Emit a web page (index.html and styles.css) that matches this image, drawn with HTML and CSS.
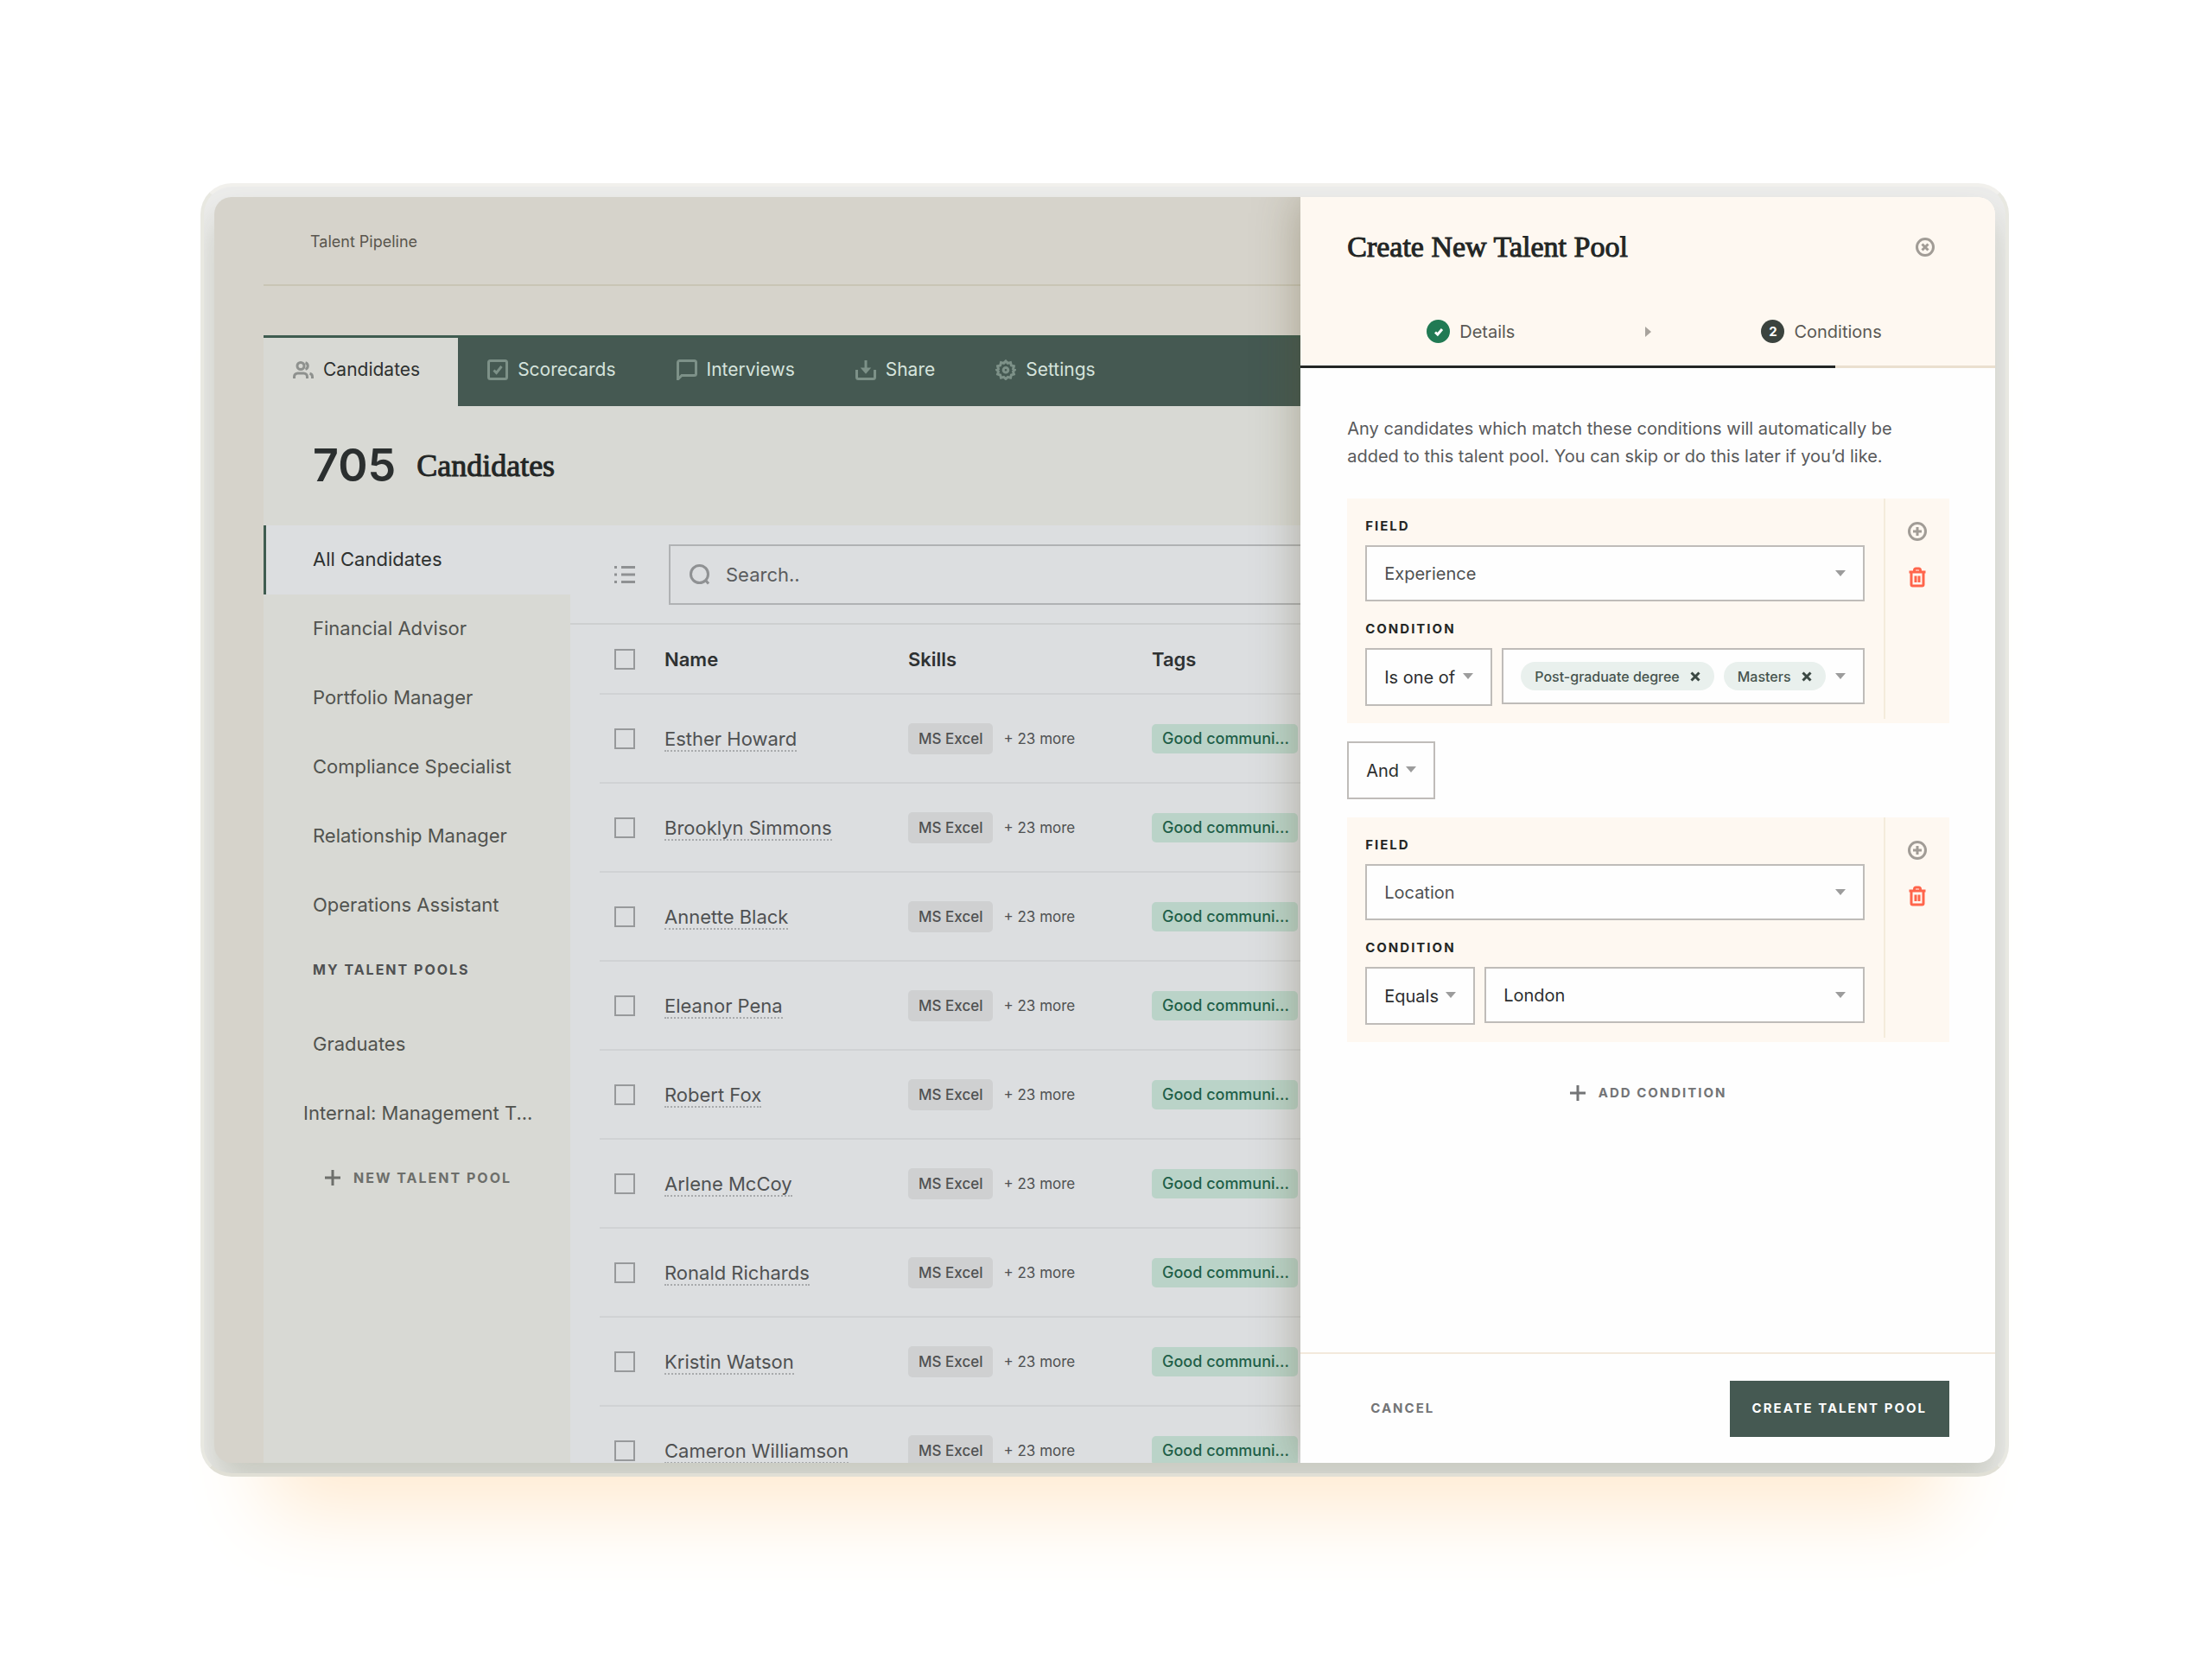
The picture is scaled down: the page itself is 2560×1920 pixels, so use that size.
FILE: index.html
```html
<!DOCTYPE html>
<html lang="en">
<head>
<meta charset="utf-8">
<title>Talent Pipeline</title>
<link rel="stylesheet" href="styles.css">
</head>
<body>
<svg class="sprite" aria-hidden="true">
  <symbol id="i-users" viewBox="0 0 24 24"><path d="M1.500 22v-2a4 4 0 0 1 4-4h7a4 4 0 0 1 4 4v2M22.500 22v-2a4 4 0 0 0-3-3.800M14.500 3.700a4 4 0 0 1 0 7.600"/><circle cx="9" cy="7.500" r="4"/></symbol>
  <symbol id="i-check" viewBox="0 0 24 24"><rect x="1.500" y="1.500" width="21" height="21" rx="2"/><path d="M7.500 12.500l3 3 6-7.500"/></symbol>
  <symbol id="i-chat" viewBox="0 0 24 24"><path d="M1.500 23V3.500a2 2 0 0 1 2-2h17a2 2 0 0 1 2 2v13a2 2 0 0 1-2 2H6z"/></symbol>
  <symbol id="i-share" viewBox="0 0 24 24"><path d="M1.500 12v8.500a2 2 0 0 0 2 2h17a2 2 0 0 0 2-2V12M12 1v12"/><path d="M9 11l3 3.500 3-3.500z" fill="currentColor"/></symbol>
  <symbol id="i-gear" viewBox="0 0 24 24"><path d="M12 2l2.300 2.400 3.200-.8.900 3.200 3 .9-.8 3.200L22.500 12l-1.900 2 .8 3.100-3 .9-.9 3.200-3.200-.8L12 22.500l-2.300-2.100-3.200.8-.9-3.200-3-.9.8-3.100L1.500 12l1.900-1.100-.8-3.200 3-.9.900-3.200 3.200.8z"/><circle cx="12" cy="12.200" r="2.800"/></symbol>
  <symbol id="i-list" viewBox="0 0 24 24"><path d="M8 3.500h16M8 12h16M8 20.500h16M0 3.500h3M0 12h3M0 20.500h3"/></symbol>
  <symbol id="i-search" viewBox="0 0 24 24"><circle cx="11.500" cy="11.500" r="10"/><path d="M18.500 18.500L22 22.500"/></symbol>
  <symbol id="i-plus" viewBox="0 0 18 18"><path d="M9 0v18M0 9h18"/></symbol>
  <symbol id="i-close" viewBox="0 0 24 24"><circle cx="12" cy="12" r="9.500"/><path d="M8.500 8.500l7 7M15.500 8.500l-7 7"/></symbol>
  <symbol id="i-add" viewBox="0 0 24 24"><circle cx="12" cy="12" r="9.500"/><path d="M12 7v10M7 12h10"/></symbol>
  <symbol id="i-trash" viewBox="0 0 24 24"><path d="M2.500 6h19M8.500 5.500V4a2 2 0 0 1 2-2h3a2 2 0 0 1 2 2v1.500M5 6v14.500a1.500 1.500 0 0 0 1.500 1.500h11a1.500 1.500 0 0 0 1.500-1.500V6M10 10.500v7.500M14 10.500v7.500"/></symbol>
  <symbol id="i-x" viewBox="0 0 12 12"><path d="M1.500 1.500l9 9M10.500 1.500l-9 9"/></symbol>
  <symbol id="i-tick" viewBox="0 0 12 12"><path d="M2 6.500L4.800 9 10 3"/></symbol>
</svg>

<div class="frame">
<div class="window">
  <div class="app">
    <header class="topbar">Talent Pipeline</header>
    <main class="card">
      <nav class="tabs">
        <a class="tab tab-active" href="#"><svg class="icon"><use href="#i-users"/></svg>Candidates</a>
        <a class="tab" href="#"><svg class="icon"><use href="#i-check"/></svg>Scorecards</a>
        <a class="tab" href="#"><svg class="icon"><use href="#i-chat"/></svg>Interviews</a>
        <a class="tab" href="#"><svg class="icon"><use href="#i-share"/></svg>Share</a>
        <a class="tab" href="#"><svg class="icon"><use href="#i-gear"/></svg>Settings</a>
      </nav>
      <h1 class="heading"><span class="count">705</span><span class="serif serif-large">Candidates</span></h1>
      <div class="columns">
        <aside class="sidebar">
          <a class="side-item side-active" href="#">All Candidates</a>
          <a class="side-item" href="#">Financial Advisor</a>
          <a class="side-item" href="#">Portfolio Manager</a>
          <a class="side-item" href="#">Compliance Specialist</a>
          <a class="side-item" href="#">Relationship Manager</a>
          <a class="side-item" href="#">Operations Assistant</a>
          <h2 class="side-title">My talent pools</h2>
          <a class="side-item" href="#">Graduates</a>
          <a class="side-item side-long" href="#">Internal: Management T...</a>
          <button class="text-button side-new" type="button"><svg class="icon-plus"><use href="#i-plus"/></svg>New talent pool</button>
        </aside>
        <section class="list">
          <div class="toolbar">
            <button class="icon-button list-toggle" type="button" aria-label="List view"><svg class="icon"><use href="#i-list"/></svg></button>
            <div class="search">
              <svg class="icon"><use href="#i-search"/></svg>
              <input class="search-input" type="text" placeholder="Search.." aria-label="Search">
            </div>
          </div>
          <table class="table">
            <thead>
              <tr><th class="c-check"><input class="box" type="checkbox" aria-label="Select all"></th><th class="c-name">Name</th><th class="c-skills">Skills</th><th>Tags</th></tr>
            </thead>
            <tbody>
              <tr><td><input class="box" type="checkbox" aria-label="Esther Howard"></td><td><a class="person" href="#">Esther Howard</a></td><td><span class="skill">MS Excel</span><span class="more">+ 23 more</span></td><td><span class="tag">Good communi...</span></td></tr>
              <tr><td><input class="box" type="checkbox" aria-label="Brooklyn Simmons"></td><td><a class="person" href="#">Brooklyn Simmons</a></td><td><span class="skill">MS Excel</span><span class="more">+ 23 more</span></td><td><span class="tag">Good communi...</span></td></tr>
              <tr><td><input class="box" type="checkbox" aria-label="Annette Black"></td><td><a class="person" href="#">Annette Black</a></td><td><span class="skill">MS Excel</span><span class="more">+ 23 more</span></td><td><span class="tag">Good communi...</span></td></tr>
              <tr><td><input class="box" type="checkbox" aria-label="Eleanor Pena"></td><td><a class="person" href="#">Eleanor Pena</a></td><td><span class="skill">MS Excel</span><span class="more">+ 23 more</span></td><td><span class="tag">Good communi...</span></td></tr>
              <tr><td><input class="box" type="checkbox" aria-label="Robert Fox"></td><td><a class="person" href="#">Robert Fox</a></td><td><span class="skill">MS Excel</span><span class="more">+ 23 more</span></td><td><span class="tag">Good communi...</span></td></tr>
              <tr><td><input class="box" type="checkbox" aria-label="Arlene McCoy"></td><td><a class="person" href="#">Arlene McCoy</a></td><td><span class="skill">MS Excel</span><span class="more">+ 23 more</span></td><td><span class="tag">Good communi...</span></td></tr>
              <tr><td><input class="box" type="checkbox" aria-label="Ronald Richards"></td><td><a class="person" href="#">Ronald Richards</a></td><td><span class="skill">MS Excel</span><span class="more">+ 23 more</span></td><td><span class="tag">Good communi...</span></td></tr>
              <tr><td><input class="box" type="checkbox" aria-label="Kristin Watson"></td><td><a class="person" href="#">Kristin Watson</a></td><td><span class="skill">MS Excel</span><span class="more">+ 23 more</span></td><td><span class="tag">Good communi...</span></td></tr>
              <tr><td><input class="box" type="checkbox" aria-label="Cameron Williamson"></td><td><a class="person" href="#">Cameron Williamson</a></td><td><span class="skill">MS Excel</span><span class="more">+ 23 more</span></td><td><span class="tag">Good communi...</span></td></tr>
            </tbody>
          </table>
        </section>
      </div>
    </main>
  </div>

  <section class="drawer" role="dialog" aria-labelledby="drawer-title">
    <header class="drawer-head">
      <div class="drawer-top">
        <h2 class="serif" id="drawer-title">Create New Talent Pool</h2>
        <button class="icon-button" type="button" aria-label="Close"><svg class="icon"><use href="#i-close"/></svg></button>
      </div>
      <ol class="steps">
        <li class="step"><span class="dot dot-done"><svg class="icon-tick"><use href="#i-tick"/></svg></span>Details</li>
        <li class="step-arrow" aria-hidden="true"></li>
        <li class="step"><span class="dot">2</span>Conditions</li>
      </ol>
      <div class="progress"><div class="progress-fill"></div></div>
    </header>

    <form class="drawer-body" id="pool-form">
      <p class="intro">Any candidates which match these conditions will automatically be added to this talent pool. You can skip or do this later if you’d like.</p>

      <div class="rule">
        <div class="rule-main">
          <label class="label" for="field-1">Field</label>
          <div class="select"><select id="field-1"><option>Experience</option></select></div>
          <label class="label" for="op-1">Condition</label>
          <div class="rule-row">
            <div class="select select-fit"><select id="op-1"><option>Is one of</option></select></div>
            <div class="select select-chips">
              <span class="chip">Post-graduate degree<button class="chip-x" type="button" aria-label="Remove Post-graduate degree"><svg class="icon-x"><use href="#i-x"/></svg></button></span>
              <span class="chip">Masters<button class="chip-x" type="button" aria-label="Remove Masters"><svg class="icon-x"><use href="#i-x"/></svg></button></span>
            </div>
          </div>
        </div>
        <div class="rule-side">
          <button class="icon-button" type="button" aria-label="Add"><svg class="icon"><use href="#i-add"/></svg></button>
          <button class="icon-button danger" type="button" aria-label="Delete"><svg class="icon"><use href="#i-trash"/></svg></button>
        </div>
      </div>

      <div class="select select-fit select-join"><select aria-label="Join with"><option>And</option></select></div>

      <div class="rule">
        <div class="rule-main">
          <label class="label" for="field-2">Field</label>
          <div class="select"><select id="field-2"><option>Location</option></select></div>
          <label class="label" for="op-2">Condition</label>
          <div class="rule-row">
            <div class="select select-fit"><select id="op-2"><option>Equals</option></select></div>
            <div class="select select-value"><select aria-label="Value"><option>London</option></select></div>
          </div>
        </div>
        <div class="rule-side">
          <button class="icon-button" type="button" aria-label="Add"><svg class="icon"><use href="#i-add"/></svg></button>
          <button class="icon-button danger" type="button" aria-label="Delete"><svg class="icon"><use href="#i-trash"/></svg></button>
        </div>
      </div>

      <button class="text-button add" type="button"><svg class="icon-plus"><use href="#i-plus"/></svg>Add condition</button>
    </form>

    <footer class="drawer-foot">
      <button class="text-button" type="button">Cancel</button>
      <button class="primary" type="submit" form="pool-form">Create talent pool</button>
    </footer>
  </section>
</div>
</div>
</body>
</html>
```

FILE: styles.css
```css
* { box-sizing: border-box; }

body {
  margin: 0;
  height: 100vh;
  padding: 212px 235px 211px 232px;
  display: flex;
  background: #fff;
  color: #4f5152;
  font: 400 22px/32px Inter, "Liberation Sans", sans-serif;
}

h1, h2, p, ol { margin: 0; padding: 0; font-weight: 400; }
a { color: inherit; text-decoration: none; }
button, input, select { font: inherit; color: inherit; }
button { border: 0; padding: 0; background: none; }

.sprite { display: none; }
svg { flex: none; display: block; fill: none; stroke: currentColor; stroke-width: 3px; }
.icon { width: 24px; height: 24px; }
.icon-plus { width: 18px; height: 18px; }
.icon-tick { width: 12px; height: 12px; }
.icon-x { width: 12px; height: 12px; }

.serif {
  font: 400 34px/40px "Liberation Serif", serif;
  color: #232625;
  -webkit-text-stroke: 1px #232625;
}
.serif-large { font-size: 36px; }

/* Window frame */
.frame {
  flex: 1;
  display: flex;
  min-width: 0;
  padding: 12px;
  border: 4px solid;
  border-color: #f1f0ec #e8e8e1 #e0dfd5 #e8e8e1;
  border-radius: 36px;
  background: #ededec;
  overflow: hidden;
  box-shadow: 0 116px 90px -78px #ffead0;
}
.window {
  flex: 1;
  display: flex;
  min-width: 0;
  border-radius: 20px;
  background: #d6d3cb;
  overflow: hidden;
  box-shadow: 0 24px 40px rgba(90, 95, 60, .26);
}

/* Page behind the drawer */
.app {
  flex: 1;
  min-width: 0;
  display: flex;
  flex-direction: column;
  gap: 57px;
  padding-left: 57px;
  overflow: hidden;
  white-space: nowrap;
}
.topbar {
  flex: none;
  height: 103px;
  padding: 36px 54px;
  border-bottom: 2px solid #c9c5b5;
  color: #5a564e;
  font-size: 18px;
}
.card { flex: 1; min-height: 0; display: flex; flex-direction: column; background: #d8d9d4; }
.tabs { flex: none; display: flex; height: 82px; background: #455952; border-top: 3px solid #3f5c50; font-size: 21px; }
.tab { display: flex; gap: 11px; padding: 21px 36px 0 34px; color: #d5e3dc; }
.tab .icon { margin-top: 4px; color: #7d9188; }
.tab-active { padding-right: 44px; background: #d8d9d4; color: #2e3130; }
.tab-active .icon { color: #8e918e; }
.heading { flex: none; display: flex; align-items: center; gap: 24px; height: 138px; padding-left: 57px; }
.count { color: #2b2f2f; font-size: 52px; font-weight: 600; }

.columns { flex: 1; min-height: 0; display: flex; }
.sidebar { flex: none; width: 355px; }
.side-item { display: block; height: 80px; padding: 23px 54px; border-left: 3px solid transparent; color: #51534f; }
.side-active { background: #dcdee0; border-color: #3f5c50; color: #2e3130; }
.side-long { padding-left: 43px; }
.side-title { height: 81px; padding: 18px 57px; font-size: 16px; line-height: 32px; font-weight: 700; letter-spacing: 2px; text-transform: uppercase; }

.text-button {
  display: flex;
  align-items: center;
  gap: 15px;
  color: #737476;
  font-size: 15px;
  font-weight: 700;
  letter-spacing: 2px;
  text-transform: uppercase;
}
.side-new { margin: 18px 0 0 71px; color: #6d6f6b; font-size: 16px; }

.list { flex: 1; min-width: 0; background: #dcdee0; overflow: hidden; }
.toolbar { display: flex; align-items: center; height: 115px; padding-left: 51px; border-bottom: 2px solid #cdcfd0; }
.icon-button { display: flex; color: #a19c96; }
.list-toggle { margin-right: 39px; color: #8f9193; }
.search { flex: 1; display: flex; align-items: center; height: 70px; padding-left: 22px; gap: 18px; border: 2px solid #b0b2b4; border-right: 0; }
.search .icon { color: #8f9193; }
.search-input { flex: 1; min-width: 0; border: 0; padding: 0; background: none; outline: 0; }
.search-input::placeholder { color: #5a5c5e; opacity: 1; }

.table { width: calc(100% - 34px); margin-left: 34px; table-layout: fixed; border-spacing: 0; text-align: left; }
.table th, .table td { padding: 0; border-bottom: 2px solid #d0d2d4; vertical-align: middle; }
.table th { height: 81px; color: #2e3132; font-weight: 600; }
.table td { height: 103px; }
.c-check { width: 75px; }
.c-name, .c-skills { width: 282px; }
.box { appearance: none; display: block; width: 24px; height: 24px; margin: 0 0 0 17px; border: 2px solid #97999b; }
.person { display: inline-block; line-height: 26px; border-bottom: 2px dotted #a8aaac; }
.skill, .tag { display: inline-block; padding: 0 12px; border-radius: 5px; font-size: 17px; font-weight: 500; line-height: 36px; }
.skill { background: #cfd0d1; }
.more { margin-left: 12px; font-size: 17px; }
.tag { width: 169px; background: #bad3c8; color: #1f5f48; font-size: 18px; line-height: 34px; }

/* Drawer */
.drawer {
  position: relative;
  flex: none;
  width: 39%;
  display: flex;
  flex-direction: column;
  background: #fefefe;
  box-shadow: 0 0 50px rgba(80, 70, 30, .35);
  font-size: 20px;
}
.drawer-head { flex: none; background: #fef8f1; }
.drawer-top { display: flex; align-items: center; justify-content: space-between; height: 116px; padding: 0 69px 0 54px; }
.steps { display: flex; align-items: center; height: 79px; padding: 0 0 0 146px; list-style: none; }
.step { display: flex; align-items: center; gap: 11px; color: #5a5854; }
.step-arrow { margin: 0 127px 0 151px; border: solid transparent; border-width: 6px 0 6px 7px; border-left-color: #a8a39d; }
.dot { display: flex; align-items: center; justify-content: center; width: 27px; height: 27px; border-radius: 50%; background: #3b433e; color: #fff; font-size: 15px; font-weight: 700; }
.dot-done { background: #217a54; }
.progress { height: 3px; background: #eadfcf; }
.progress-fill { width: 77%; height: 3px; background: #232625; }

.drawer-body { flex: 1; min-height: 0; display: flex; flex-direction: column; align-items: flex-start; padding: 54px 53px 0 54px; }
.intro { margin-bottom: 33px; padding-right: 36px; color: #58595b; }
.rule { display: flex; align-self: stretch; height: 260px; background: #fef8f1; }
.rule-main { flex: 1; min-width: 0; padding: 20px 22px 0 21px; }
.rule-side { display: flex; flex-direction: column; align-items: center; gap: 29px; width: 76px; height: 255px; padding-top: 26px; border-left: 2px solid #f4ecdc; }
.danger { color: #ff654b; }
.label { display: block; margin-bottom: 10px; color: #232625; font-size: 15px; line-height: 24px; font-weight: 700; letter-spacing: 2px; text-transform: uppercase; }
.select + .label { margin-top: 20px; }
.rule-row { display: flex; align-items: flex-start; gap: 11px; }
.select { position: relative; height: 65px; border: 2px solid #bfbcb9; background: #fefefe; }
.select::after {
  content: "";
  position: absolute;
  right: 20px;
  top: 27px;
  border: solid transparent;
  border-width: 7px 6px 0;
  border-top-color: #9c9c9c;
  pointer-events: none;
}
.select select { appearance: none; display: block; width: 100%; height: 100%; margin: 0; padding: 0 44px 0 20px; border: 0; background: none; outline: 0; }
.select-fit { flex: none; height: 67px; color: #2c2e2f; }
.select-fit select { padding-right: 40px; }
.select-value { flex: 1; color: #2c2e2f; }
.select-join { margin: 21px 0; }
.select-chips { flex: 1; display: flex; align-items: center; gap: 11px; padding-left: 20px; }
.chip { display: flex; align-items: center; gap: 12px; height: 33px; padding: 0 16px; border-radius: 17px; background: #e9f0ed; color: #46544e; font-size: 16px; font-weight: 500; white-space: nowrap; }
.chip-x { color: #3b4843; }
.add { align-self: center; margin-top: 43px; }

.drawer-foot { flex: none; display: flex; align-items: center; justify-content: space-between; height: 128px; padding: 0 53px 0 81px; border-top: 2px solid #f3e9dc; }
.primary { height: 65px; padding: 0 26px; background: #455952; color: #fff; font-size: 15px; font-weight: 700; letter-spacing: 2px; text-transform: uppercase; }
```
